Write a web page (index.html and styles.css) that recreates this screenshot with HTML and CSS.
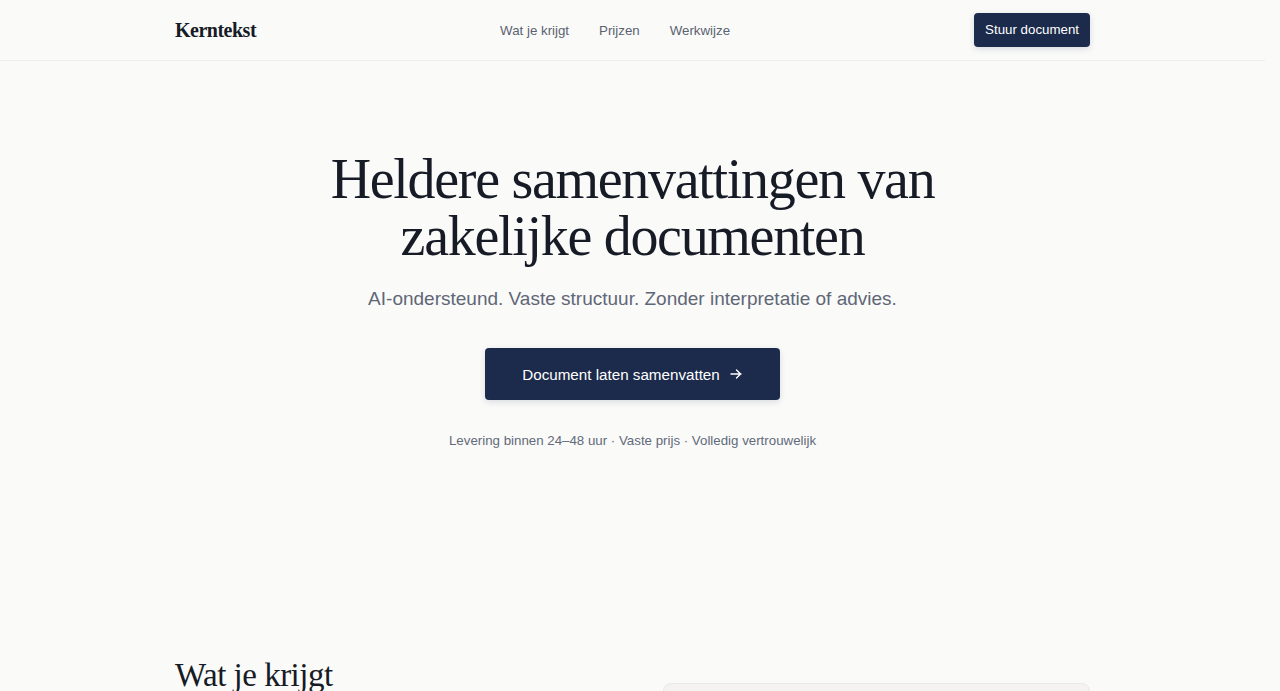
FILE: index.html
```html
<!DOCTYPE html>
<html lang="nl">
<head>
<meta charset="utf-8">
<title>Kerntekst</title>
<link rel="stylesheet" href="styles.css">
</head>
<body>
<header class="site-header">
  <div class="container header-inner">
    <a class="logo" href="#">Kerntekst</a>
    <nav class="nav">
      <a href="#">Wat je krijgt</a>
      <a href="#">Prijzen</a>
      <a href="#">Werkwijze</a>
    </nav>
    <a class="btn btn-small" href="#">Stuur document</a>
  </div>
</header>
<main>
  <section class="hero">
    <div class="container hero-inner">
      <h1>Heldere samenvattingen van zakelijke documenten</h1>
      <p class="lead">AI-ondersteund. Vaste structuur. Zonder interpretatie of advies.</p>
      <a class="btn btn-large" href="#">Document laten samenvatten
        <svg class="arrow" width="12" height="10" viewBox="0 0 12 10" aria-hidden="true"><path d="M1 5h10M6.5 1l4 4-4 4" fill="none" stroke="#fff" stroke-width="1.4" stroke-linecap="round" stroke-linejoin="round"/></svg>
      </a>
      <p class="meta">Levering binnen 24–48 uur · Vaste prijs · Volledig vertrouwelijk</p>
    </div>
  </section>
  <section class="features">
    <div class="container features-grid">
      <div class="features-text">
        <h2>Wat je krijgt</h2>
        <p>Een samenvatting met een vaste opbouw: kernpunten, afspraken, termijnen en bedragen.</p>
      </div>
      <div class="card">
        <p>Voorbeeld samenvatting</p>
      </div>
    </div>
  </section>
</main>
</body>
</html>
```
FILE: styles.css
```css
* { box-sizing: border-box; }
html, body { margin: 0; padding: 0; }
html { overflow-y: scroll; }
body {
  background: #fafaf9;
  color: #1a1f2b;
  font-family: "Liberation Sans", Arial, sans-serif;
  padding-right: 15px;
}
a { text-decoration: none; color: inherit; }
.container {
  max-width: 963px;
  margin: 0 auto;
  padding: 0 24px;
}
.site-header {
  border-bottom: 1px solid #f0eeeb;
}
.header-inner {
  height: 60px;
  display: flex;
  align-items: center;
  justify-content: space-between;
}
.logo {
  font-family: "Liberation Serif", "Times New Roman", serif;
  font-weight: bold;
  font-size: 20px;
  letter-spacing: -0.5px;
  color: #161b26;
}
.nav {
  display: flex;
  gap: 30px;
  font-size: 13.3px;
  color: #5b6270;
}
.btn {
  display: inline-flex;
  align-items: center;
  background: #1c2a4b;
  color: #fff;
  border-radius: 4px;
  box-shadow: 0 2px 6px rgba(28, 42, 75, 0.15);
}
.btn-small {
  font-size: 13.3px;
  height: 34px;
  padding: 0 11px;
  margin-top: -1px;
}
.hero {
  padding: 90px 0 205px;
}
.hero-inner {
  display: flex;
  flex-direction: column;
  align-items: center;
  text-align: center;
}
h1 {
  font-family: "Liberation Serif", "Times New Roman", serif;
  font-weight: normal;
  font-size: 56px;
  line-height: 57px;
  letter-spacing: -1.3px;
  margin: 0;
  max-width: 640px;
  color: #161b26;
}
.lead {
  font-size: 19px;
  color: #5f6777;
  margin: 23px 0 0;
}
.btn-large {
  margin-top: 38px;
  height: 52px;
  padding: 0 38px 0 37px;
  font-size: 15.2px;
  gap: 10px;
}
.arrow { display: block; }
.meta {
  font-size: 13.3px;
  color: #626a79;
  margin: 33px 0 0;
}
.features-grid {
  display: grid;
  grid-template-columns: 1fr 1fr;
  gap: 60px;
}
h2 {
  font-family: "Liberation Serif", "Times New Roman", serif;
  font-weight: normal;
  font-size: 33px;
  margin: 4px 0 20px;
  color: #161b26;
  letter-spacing: -0.5px;
}
.features-text p { font-size: 16px; color: #5f6777; line-height: 1.6; }
.card {
  margin-top: 30px;
  background: #f4f3f1;
  border: 1px solid #ebe9e5;
  border-radius: 8px;
  padding: 24px;
  min-height: 300px;
  color: #5f6777;
}
```
